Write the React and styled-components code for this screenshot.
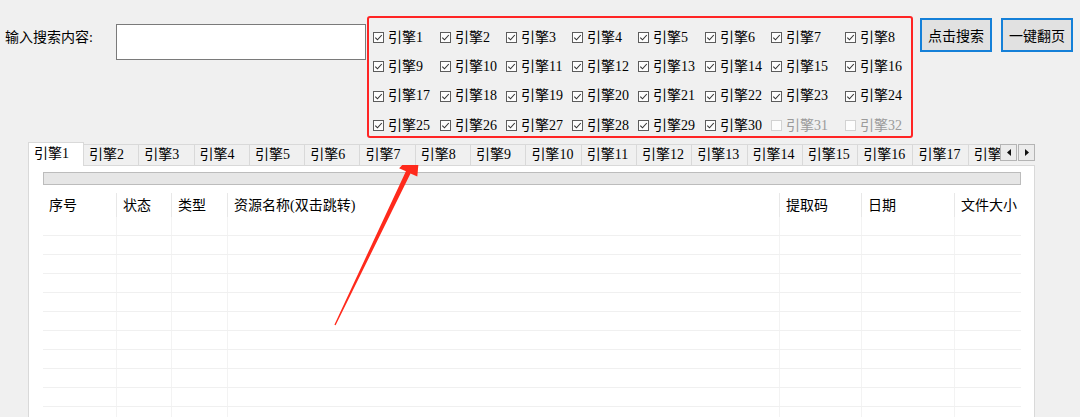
import React from 'react';
import styled, { createGlobalStyle } from 'styled-components';

const GlobalStyle = createGlobalStyle`
  html, body { margin: 0; padding: 0; background: #f0f0f0; }
  body {
    font-family: "Liberation Serif", "Noto Sans CJK SC", serif;
    font-size: 14px;
    color: #000;
  }
  #root { width: 1080px; height: 417px; overflow: hidden; }
`;

const Page = styled.div`
  position: relative;
  width: 1080px;
  height: 417px;
  overflow: hidden;
  background: #f0f0f0;
`;

const TopRow = styled.div`
  display: flex;
  align-items: flex-start;
  padding: 16px 0 0 5px;
  height: 138px;
  box-sizing: border-box;
`;

const Label = styled.div`
  width: 111px;
  margin-top: 12px;
  line-height: 20px;
  white-space: nowrap;
`;

const SearchInput = styled.input`
  width: 250px;
  height: 36px;
  box-sizing: border-box;
  margin: 8px 0 0 0;
  border: 1px solid #7a7a7a;
  background: #fff;
  outline: none;
  padding: 0 4px;
  font: inherit;
`;

const EngineBox = styled.div`
  margin-left: 1px;
  width: 546px;
  height: 122px;
  box-sizing: border-box;
  border: 2px solid #ff2424;
  border-radius: 3px;
  padding: 5px 0 0 3px;
  display: grid;
  grid-template-columns: 67px 66px 66px 66px 67px 66px 74px auto;
  grid-auto-rows: 29.3px;
  align-items: center;
`;

const EngineItem = styled.label`
  display: flex;
  align-items: center;
  gap: 4px;
  white-space: nowrap;
  line-height: 18px;
  color: ${(p) => (p.$disabled ? '#9a9a9a' : '#000')};
  padding-left: 1px;
`;

const CheckSvg = styled.svg`
  flex: none;
  display: block;
`;

const Button = styled.button`
  width: 72px;
  height: 34px;
  margin: 2px 0 0 ${(p) => p.$gap}px;
  box-sizing: border-box;
  border: 2px solid #1580d8;
  background: #e1e1e1;
  font: inherit;
  padding: 0;
  color: #000;
  white-space: nowrap;
`;

const TabControl = styled.div`
  margin: 4px 0 0 28px;
  width: 1007px;
`;

const TabStrip = styled.div`
  display: flex;
  align-items: flex-end;
  height: 23px;
  position: relative;
`;

const TabViewport = styled.div`
  width: 972px;
  height: 24px;
  overflow: hidden;
  display: flex;
  align-items: flex-end;
  margin-bottom: -1px;
  position: relative;
  z-index: 2;
  flex: none;
`;

const Tab = styled.div`
  flex: none;
  box-sizing: border-box;
  width: ${(p) => (p.$active ? '56px' : '55.3px')};
  height: ${(p) => (p.$active ? '24px' : '21px')};
  margin-bottom: ${(p) => (p.$active ? '0' : '1px')};
  background: ${(p) => (p.$active ? '#fff' : '#f0f0f0')};
  border: 1px solid #d9d9d9;
  border-bottom: none;
  border-left: ${(p) => (p.$active ? '1px solid #d9d9d9' : 'none')};
  padding-left: 5px;
  line-height: ${(p) => (p.$active ? '22px' : '19px')};
  white-space: nowrap;
  overflow: hidden;
`;

const ScrollButtons = styled.div`
  display: flex;
  gap: 1px;
  align-self: flex-start;
  margin-top: 2px;
`;

const ScrollBtn = styled.div`
  width: 17px;
  height: 17px;
  box-sizing: border-box;
  border: 1px solid #b4b4b4;
  background: #ececec;
  display: flex;
  align-items: center;
  justify-content: center;
`;

const Panel = styled.div`
  box-sizing: border-box;
  width: 1007px;
  height: 260px;
  background: #fff;
  border: 1px solid #d9d9d9;
  padding: 6px 13px 0 14px;
`;

const Bar = styled.div`
  width: 978px;
  height: 13px;
  box-sizing: border-box;
  border: 1px solid #bcbcbc;
  background: #e6e6e6;
`;

const COLS = '74px 55px 56px 552px 82px 93px 66px';

const ListView = styled.div`
  margin-top: 8px;
  width: 978px;
`;

const HeaderRow = styled.div`
  display: grid;
  grid-template-columns: ${COLS};
  height: 24px;
`;

const HeaderCell = styled.div`
  padding-left: 6px;
  line-height: 25px;
  white-space: nowrap;
  overflow: hidden;
  border-right: ${(p) => (p.$last ? 'none' : '1px solid #e8e8e8')};
`;

const Row = styled.div`
  display: grid;
  grid-template-columns: ${COLS};
  height: 19px;
  box-sizing: border-box;
  border-bottom: 1px solid #f0f0f0;
`;

const Cell = styled.div`
  border-right: ${(p) => (p.$last ? 'none' : '1px solid #f3f3f3')};
`;

const ArrowLayer = styled.svg`
  position: absolute;
  left: 0;
  top: 0;
  pointer-events: none;
`;

const CheckBox = ({ checked, disabled }) => (
  <CheckSvg width="11" height="11" viewBox="0 0 11 11">
    <rect
      x="0.5"
      y="0.5"
      width="10"
      height="10"
      fill="#fdfdfd"
      stroke={disabled ? '#d2d2d2' : '#5c5c5c'}
    />
    {checked && (
      <path d="M2.3 5.6 L4.5 7.8 L8.8 3" fill="none" stroke="#333" strokeWidth="1.1" />
    )}
  </CheckSvg>
);

const engines = Array.from({ length: 32 }, (_, i) => i + 1);
const tabs = Array.from({ length: 18 }, (_, i) => i + 1);
const headers = ['序号', '状态', '类型', '资源名称(双击跳转)', '提取码', '日期', '文件大小'];

export default function App() {
  return (
    <Page>
      <GlobalStyle />
      <TopRow>
        <Label>输入搜索内容:</Label>
        <SearchInput type="text" />
        <EngineBox>
          {engines.map((n) => {
            const disabled = n > 30;
            return (
              <EngineItem key={n} $disabled={disabled}>
                <CheckBox checked={!disabled} disabled={disabled} />
                <span>引擎{n}</span>
              </EngineItem>
            );
          })}
        </EngineBox>
        <Button $gap={7}>点击搜索</Button>
        <Button $gap={9}>一键翻页</Button>
      </TopRow>
      <TabControl>
        <TabStrip>
          <TabViewport>
            {tabs.map((n) => (
              <Tab key={n} $active={n === 1}>
                引擎{n}
              </Tab>
            ))}
          </TabViewport>
          <ScrollButtons>
            <ScrollBtn>
              <svg width="4" height="7" viewBox="0 0 4 7">
                <path d="M4 0 L0 3.5 L4 7 Z" fill="#111" />
              </svg>
            </ScrollBtn>
            <ScrollBtn>
              <svg width="4" height="7" viewBox="0 0 4 7">
                <path d="M0 0 L4 3.5 L0 7 Z" fill="#111" />
              </svg>
            </ScrollBtn>
          </ScrollButtons>
        </TabStrip>
        <Panel>
          <Bar />
          <ListView>
            <HeaderRow>
              {headers.map((h, i) => (
                <HeaderCell key={h} $last={i === headers.length - 1}>
                  {h}
                </HeaderCell>
              ))}
            </HeaderRow>
            {Array.from({ length: 11 }, (_, r) => (
              <Row key={r}>
                {headers.map((h, i) => (
                  <Cell key={h} $last={i === headers.length - 1} />
                ))}
              </Row>
            ))}
          </ListView>
        </Panel>
      </TabControl>
      <ArrowLayer width="1080" height="417" viewBox="0 0 1080 417">
        <polygon
          points="420,147 417.3,176.6 410.5,173.5 335.6,325.3 334.4,324.7 405.9,171.3 399.1,168.2"
          fill="#ff2a1c"
        />
      </ArrowLayer>
    </Page>
  );
}
